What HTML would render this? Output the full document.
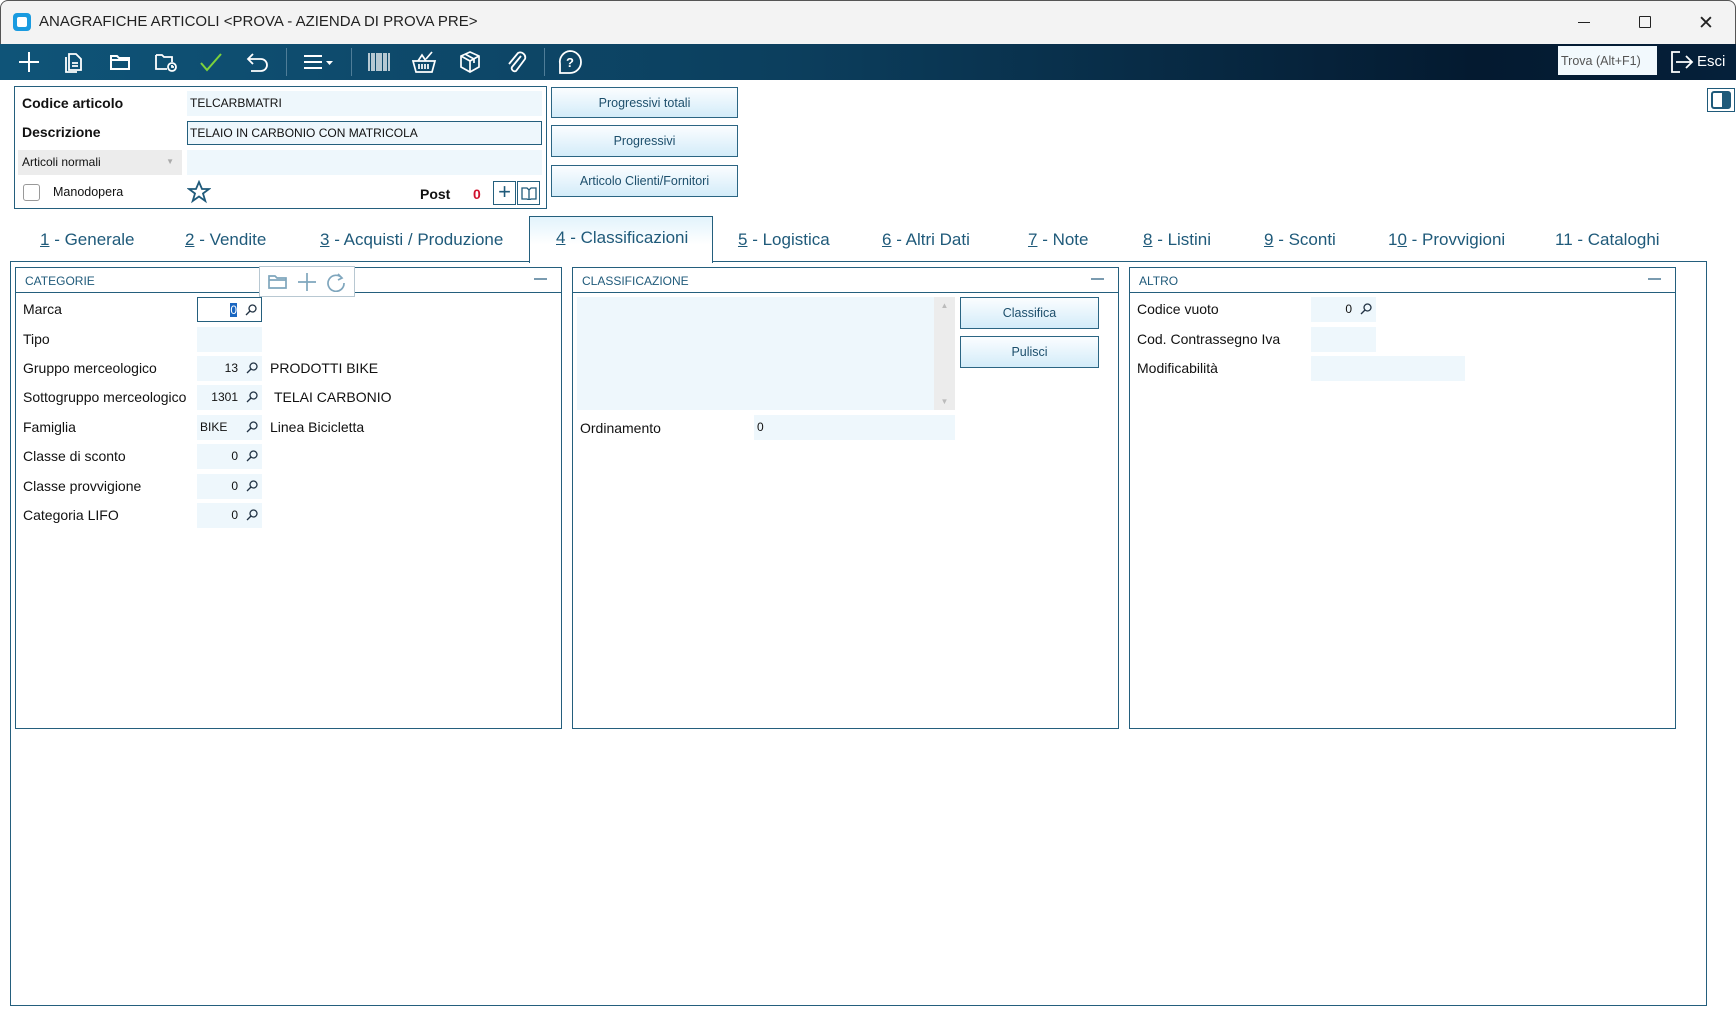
<!DOCTYPE html>
<html><head><meta charset="utf-8"><style>
*{box-sizing:border-box;margin:0;padding:0}
body{width:1736px;height:1009px;overflow:hidden;background:#fff;font-family:"Liberation Sans",sans-serif;position:relative;color:#111}
.a{position:absolute}
.title{left:0;top:0;width:1736px;height:44px;background:#f3f3f3;border:1px solid #555;border-bottom:none;border-radius:8px 8px 0 0}
.tb{left:0;top:44px;width:1736px;height:36px;background:linear-gradient(90deg,#0f5478 0%,#0c3f5e 45%,#041a30 85%,#05203a 100%)}
.ic{position:absolute;top:0;height:36px;width:30px;display:flex;align-items:center;justify-content:center}
.sep{position:absolute;top:4px;width:1px;height:28px;background:#4f7d98}
.fld{position:absolute;background:#eef7fc;font-size:12px;line-height:24px}
.lbl{position:absolute;font-size:14px}
.btn{position:absolute;border:1px solid #2b6583;background:linear-gradient(#fbfdff,#d3ecf9);color:#1d4f6c;font-size:12.5px;display:flex;align-items:center;justify-content:center}
.tab{position:absolute;top:230px;font-size:17px;color:#1f5a7a}
.tab u{text-decoration:underline}
.panel{position:absolute;top:267px;height:462px;border:1px solid #245f7d}
.ph{position:absolute;left:0;top:0;right:0;height:25px;border-bottom:1px solid #245f7d;font-size:12px;color:#1f5a7a;padding:6px 0 0 9px}
.ph:after{content:"";position:absolute;right:14px;top:10px;width:13px;height:2px;background:#7a9bb0}
.num{text-align:right;padding-right:24px}
.mag{position:absolute;right:4px;top:6px}
</style></head><body>
<div class="a title"></div>
<div class="a" style="left:13px;top:13px;width:18px;height:18px;border-radius:4px;background:#1a9be0"><div style="margin:4px;width:10px;height:10px;background:#fff;border-radius:2px"></div></div>
<div class="a" style="left:39px;top:13px;font-size:15px;color:#222">ANAGRAFICHE ARTICOLI &lt;PROVA - AZIENDA DI PROVA PRE&gt;</div>
<div class="a" style="left:1578px;top:22px;width:12px;height:1px;background:#222"></div>
<div class="a" style="left:1639px;top:16px;width:12px;height:12px;border:1px solid #222;border-radius:1px"></div>
<div class="a" style="left:1698px;top:12px;font-size:19px;color:#222">✕</div>

<div class="a tb">
<div class="ic" style="left:14px"><svg width="22" height="22"><path d="M11 1v20M1 11h20" stroke="#fff" stroke-width="2"/></svg></div>
<div class="ic" style="left:59px"><svg width="20" height="22" fill="none" stroke="#fff" stroke-width="1.8"><path d="M5 3h7l5 5v11H5z"/><path d="M2 6v15h11"/><path d="M8 12h6M8 15h6"/></svg></div>
<div class="ic" style="left:105px"><svg width="22" height="18" fill="none" stroke="#fff" stroke-width="2"><path d="M2 3h6l2 2h10v11H2z"/><path d="M2 7h18"/></svg></div>
<div class="ic" style="left:151px"><svg width="24" height="20" fill="none" stroke="#fff" stroke-width="1.8"><path d="M2 3h6l2 2h8v5M13 17H2V3"/><circle cx="18" cy="15" r="4"/><path d="M18 13v2h2"/></svg></div>
<div class="ic" style="left:196px"><svg width="24" height="20" fill="none" stroke="#7dd23b" stroke-width="2"><path d="M2 11l6 7L22 2"/></svg></div>
<div class="ic" style="left:243px"><svg width="24" height="20" fill="none" stroke="#fff" stroke-width="1.8"><path d="M7 2L2 7l5 5"/><path d="M2 7h13a6 6 0 010 12H5"/></svg></div>
<div class="sep" style="left:286px"></div>
<div class="ic" style="left:303px"><svg width="32" height="18" fill="none" stroke="#fff" stroke-width="2"><path d="M1 3h18M1 9h18M1 15h18"/><path d="M23 8h7l-3.5 4z" fill="#fff" stroke="none"/></svg></div>
<div class="sep" style="left:351px"></div>
<div class="ic" style="left:364px"><svg width="24" height="20"><path d="M2 1v18M5 1v18M7 1v18M10 1v18M12 1v18M14 1v18M17 1v18M19 1v18M22 1v18" stroke="#fff" stroke-width="1.4"/></svg></div>
<div class="ic" style="left:409px"><svg width="26" height="24" fill="none" stroke="#fff" stroke-width="1.7"><path d="M2 11h22l-3 11H5z"/><path d="M8 14v5M11 14v5M14 14v5M17 14v5"/><path d="M7 11l4-6 4 6M15 9l6-7"/></svg></div>
<div class="ic" style="left:455px"><svg width="24" height="24" fill="none" stroke="#fff" stroke-width="1.7"><path d="M12 2l9 4v11l-9 5-9-5V6z"/><path d="M3 6l9 5 9-5M12 11v11M7 4l9 5v4"/></svg></div>
<div class="ic" style="left:501px"><svg width="22" height="24" fill="none" stroke="#fff" stroke-width="1.8"><path d="M16 6L7 17a3 3 0 004 4l9-12a5 5 0 00-7-6L4 14"/></svg></div>
<div class="sep" style="left:544px"></div>
<div class="ic" style="left:555px"><svg width="26" height="26" fill="none" stroke="#fff" stroke-width="1.8"><path d="M13 2a11 11 0 110 22H3v-9A11 11 0 0113 2z"/><text x="13" y="18" fill="#fff" stroke="none" font-size="13" font-family="Liberation Sans" text-anchor="middle" font-weight="bold">?</text></svg></div>
<div class="a" style="left:1558px;top:2px;width:99px;height:29px;background:#f2f9fd;font-size:12.5px;color:#555;padding:8px 0 0 3px">Trova (Alt+F1)</div>
<div class="a" style="left:1670px;top:7px"><svg width="26" height="22" fill="none" stroke="#fff" stroke-width="1.8"><path d="M10 1H2v20h8"/><path d="M6 11h16M16 5l6 6-6 6"/></svg></div>
<div class="a" style="left:1697px;top:9px;font-size:15px;color:#fff">Esci</div>
</div>

<div class="a" style="left:1707px;top:88px;width:28px;height:24px;border:1px solid #1f5a7a;padding:2px 3px"><div style="width:20px;height:18px;border:2px solid #1f5a7a;border-radius:3px;position:relative"><div style="position:absolute;right:0;top:0;width:7px;height:14px;background:#1f5a7a"></div></div></div>

<div class="a" style="left:14px;top:86px;width:533px;height:123px;border:1px solid #245f7d"></div>
<div class="lbl" style="left:22px;top:95px;font-weight:bold">Codice articolo</div>
<div class="fld" style="left:187px;top:91px;width:355px;height:25px;padding-left:3px">TELCARBMATRI</div>
<div class="lbl" style="left:22px;top:124px;font-weight:bold">Descrizione</div>
<div class="fld" style="left:187px;top:121px;width:355px;height:24px;border:1px solid #245f7d;padding-left:2px;line-height:22px">TELAIO IN CARBONIO CON MATRICOLA</div>
<div class="fld" style="left:18px;top:150px;width:164px;height:25px;background:#ececec;padding-left:4px">Articoli normali<span style="position:absolute;right:8px;color:#aaa;font-size:8px">▼</span></div>
<div class="fld" style="left:187px;top:150px;width:355px;height:25px"></div>
<div class="a" style="left:23px;top:184px;width:17px;height:17px;border:1px solid #999;border-radius:3px"></div>
<div class="a" style="left:53px;top:185px;font-size:12.5px">Manodopera</div>
<div class="a" style="left:187px;top:180px"><svg width="24" height="24" fill="none" stroke="#1f5a7a" stroke-width="1.8"><path d="M12 2l3 7h7l-6 4.5 2.3 7.5L12 16.5 5.7 21 8 13.5 2 9h7z"/></svg></div>
<div class="lbl" style="left:420px;top:186px;font-weight:bold">Post</div>
<div class="lbl" style="left:473px;top:186px;font-weight:bold;color:#d0122e">0</div>
<div class="a" style="left:493px;top:181px;width:23px;height:24px;border:1px solid #245f7d;font-size:22px;line-height:20px;text-align:center;color:#1f5a7a">+</div>
<div class="a" style="left:517px;top:181px;width:23px;height:24px;border:1px solid #245f7d;padding:5px 3px"><svg width="16" height="13" fill="none" stroke="#1f5a7a" stroke-width="1.3"><path d="M1 1h5l2 2 2-2h5v11h-5l-2 1-2-1H1zM8 3v10"/></svg></div>

<div class="btn" style="left:551px;top:87px;width:187px;height:31px">Progressivi totali</div>
<div class="btn" style="left:551px;top:125px;width:187px;height:32px">Progressivi</div>
<div class="btn" style="left:551px;top:165px;width:187px;height:32px">Articolo Clienti/Fornitori</div>

<div class="a" style="left:10px;top:261px;width:1697px;height:745px;border:1px solid #245f7d"></div>
<div class="a" style="left:529px;top:216px;width:184px;height:47px;border:1px solid #245f7d;border-bottom:none;background:linear-gradient(#e2f3fc,#fff 60%)"></div>
<div class="tab" style="left:40px"><u>1</u> - Generale</div>
<div class="tab" style="left:185px"><u>2</u> - Vendite</div>
<div class="tab" style="left:320px"><u>3</u> - Acquisti / Produzione</div>
<div class="tab" style="left:556px;top:228px"><u>4</u> - Classificazioni</div>
<div class="tab" style="left:738px"><u>5</u> - Logistica</div>
<div class="tab" style="left:882px"><u>6</u> - Altri Dati</div>
<div class="tab" style="left:1028px"><u>7</u> - Note</div>
<div class="tab" style="left:1143px"><u>8</u> - Listini</div>
<div class="tab" style="left:1264px"><u>9</u> - Sconti</div>
<div class="tab" style="left:1388px">1<u>0</u> - Provvigioni</div>
<div class="tab" style="left:1555px">11 - Cataloghi</div>

<div class="panel" style="left:15px;width:547px"><div class="ph">CATEGORIE</div></div>
<div class="a" style="left:259px;top:266px;width:96px;height:31px;border:1px solid #b8c8d2;background:#fff;display:flex;align-items:center;justify-content:space-around;padding:0 4px">
<svg width="20" height="16" fill="none" stroke="#7fa6bd" stroke-width="1.7"><path d="M1 2h6l2 2h9v10H1z"/><path d="M1 6h17"/></svg>
<svg width="20" height="20"><path d="M10 1v18M1 10h18" stroke="#7fa6bd" stroke-width="1.7"/></svg>
<svg width="20" height="20" fill="none" stroke="#7fa6bd" stroke-width="1.7"><path d="M16 6a8 8 0 10 2 5M12 2l4 4-4 2"/></svg></div>

<div class="lbl" style="left:23px;top:301px">Marca</div>
<div class="fld num" style="left:197px;top:297px;width:65px;height:25px;border:1px solid #245f7d;background:#fff"><span style="background:#1a66c0;color:#fff">0</span><svg class="mag" width="12" height="12" fill="none" stroke="#234" stroke-width="1.3"><circle cx="7.5" cy="4.5" r="3.5"/><path d="M5 7L1 11"/></svg></div>
<div class="lbl" style="left:23px;top:331px">Tipo</div>
<div class="fld" style="left:197px;top:327px;width:65px;height:25px"></div>
<div class="lbl" style="left:23px;top:360px">Gruppo merceologico</div>
<div class="fld num" style="left:197px;top:356px;width:65px;height:25px">13<svg class="mag" width="12" height="12" fill="none" stroke="#234" stroke-width="1.3"><circle cx="7.5" cy="4.5" r="3.5"/><path d="M5 7L1 11"/></svg></div>
<div class="lbl" style="left:270px;top:360px">PRODOTTI BIKE</div>
<div class="lbl" style="left:23px;top:389px">Sottogruppo merceologico</div>
<div class="fld num" style="left:197px;top:385px;width:65px;height:25px">1301<svg class="mag" width="12" height="12" fill="none" stroke="#234" stroke-width="1.3"><circle cx="7.5" cy="4.5" r="3.5"/><path d="M5 7L1 11"/></svg></div>
<div class="lbl" style="left:274px;top:389px">TELAI CARBONIO</div>
<div class="lbl" style="left:23px;top:419px">Famiglia</div>
<div class="fld" style="left:197px;top:415px;width:65px;height:25px;padding-left:3px">BIKE<svg class="mag" width="12" height="12" fill="none" stroke="#234" stroke-width="1.3"><circle cx="7.5" cy="4.5" r="3.5"/><path d="M5 7L1 11"/></svg></div>
<div class="lbl" style="left:270px;top:419px">Linea Bicicletta</div>
<div class="lbl" style="left:23px;top:448px">Classe di sconto</div>
<div class="fld num" style="left:197px;top:444px;width:65px;height:25px">0<svg class="mag" width="12" height="12" fill="none" stroke="#234" stroke-width="1.3"><circle cx="7.5" cy="4.5" r="3.5"/><path d="M5 7L1 11"/></svg></div>
<div class="lbl" style="left:23px;top:478px">Classe provvigione</div>
<div class="fld num" style="left:197px;top:474px;width:65px;height:25px">0<svg class="mag" width="12" height="12" fill="none" stroke="#234" stroke-width="1.3"><circle cx="7.5" cy="4.5" r="3.5"/><path d="M5 7L1 11"/></svg></div>
<div class="lbl" style="left:23px;top:507px">Categoria LIFO</div>
<div class="fld num" style="left:197px;top:503px;width:65px;height:25px">0<svg class="mag" width="12" height="12" fill="none" stroke="#234" stroke-width="1.3"><circle cx="7.5" cy="4.5" r="3.5"/><path d="M5 7L1 11"/></svg></div>

<div class="panel" style="left:572px;width:547px"><div class="ph">CLASSIFICAZIONE</div></div>
<div class="fld" style="left:577px;top:297px;width:378px;height:113px"></div>
<div class="a" style="left:934px;top:297px;width:21px;height:113px;background:#ececec;color:#bbb;font-size:8px;text-align:center;padding-top:4px">▲<div style="position:absolute;bottom:4px;width:21px">▼</div></div>
<div class="btn" style="left:960px;top:297px;width:139px;height:32px">Classifica</div>
<div class="btn" style="left:960px;top:336px;width:139px;height:32px">Pulisci</div>
<div class="lbl" style="left:580px;top:420px">Ordinamento</div>
<div class="fld" style="left:754px;top:415px;width:201px;height:25px;padding-left:3px">0</div>

<div class="panel" style="left:1129px;width:547px"><div class="ph">ALTRO</div></div>
<div class="lbl" style="left:1137px;top:301px">Codice vuoto</div>
<div class="fld num" style="left:1311px;top:297px;width:65px;height:25px">0<svg class="mag" width="12" height="12" fill="none" stroke="#234" stroke-width="1.3"><circle cx="7.5" cy="4.5" r="3.5"/><path d="M5 7L1 11"/></svg></div>
<div class="lbl" style="left:1137px;top:331px">Cod. Contrassegno Iva</div>
<div class="fld" style="left:1311px;top:327px;width:65px;height:25px"></div>
<div class="lbl" style="left:1137px;top:360px">Modificabilità</div>
<div class="fld" style="left:1311px;top:356px;width:154px;height:25px"></div>
</body></html>
